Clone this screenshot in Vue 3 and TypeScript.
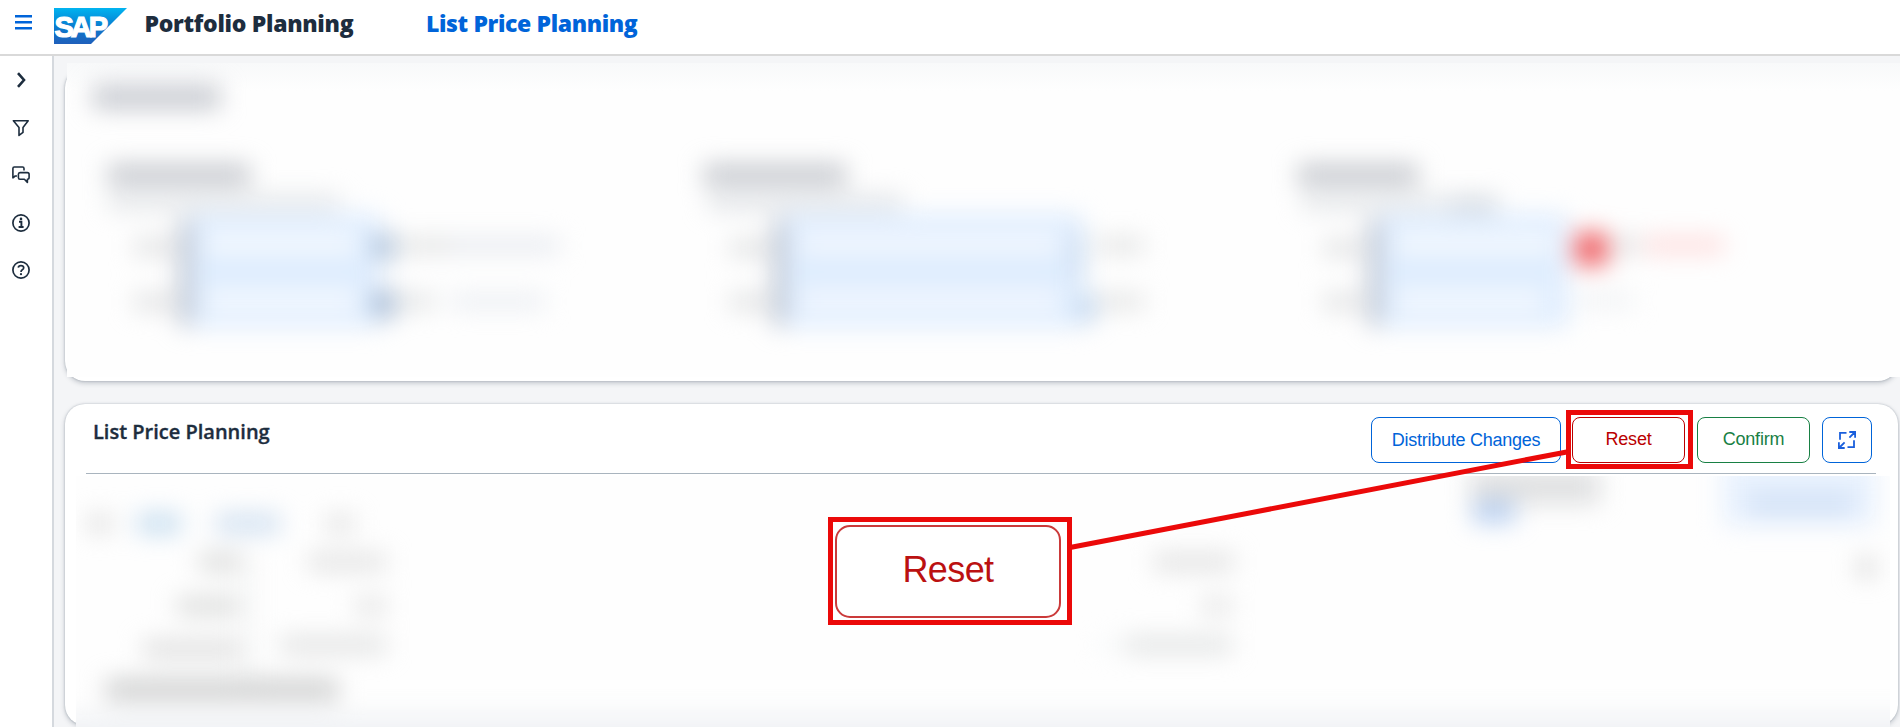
<script setup lang="ts">
interface Blob {
  x: number
  y: number
  w: number
  h: number
  c: string
}

const b = (x: number, y: number, w: number, h: number, c: string): Blob => ({ x, y, w, h, c })

const headingGrey = '#c2c5cb'
const textGrey = '#e0e1e2'

const summaryBlobs: Blob[] = [
  b(93, 86, 127, 22, '#c3c6cd'),

  b(108, 165, 142, 20, headingGrey),
  b(108, 196, 232, 13, '#dfe2e5'),
  b(134, 239, 40, 16, textGrey),
  b(134, 294, 40, 16, textGrey),
  b(188, 214, 192, 113, '#dfedfe'),
  b(206, 237, 150, 13, '#ffffff'),
  b(206, 294, 150, 13, '#ffffff'),
  b(180, 220, 10, 106, '#a9b1bf'),
  b(374, 234, 20, 26, '#a8bdd6'),
  b(374, 290, 20, 28, '#9fb4cf'),
  b(398, 238, 52, 15, '#e2e3e3'),
  b(450, 238, 110, 15, '#e7eaf0'),
  b(398, 294, 36, 15, '#e0e2e3'),
  b(450, 294, 95, 15, '#ebeef3'),

  b(704, 165, 142, 20, headingGrey),
  b(708, 196, 195, 13, '#dcdfe3'),
  b(730, 240, 38, 16, textGrey),
  b(730, 294, 38, 16, textGrey),
  b(782, 214, 300, 113, '#dfedfe'),
  b(800, 237, 260, 13, '#fcfcff'),
  b(800, 294, 260, 13, '#fcfcff'),
  b(774, 220, 10, 106, '#a9b1bf'),
  b(1072, 230, 12, 50, '#c6d8ee'),
  b(1080, 294, 14, 28, '#b6cee9'),
  b(1098, 238, 46, 15, '#e2e3e3'),
  b(1098, 294, 46, 15, '#e2e3e3'),

  b(1298, 165, 120, 20, headingGrey),
  b(1302, 196, 140, 13, '#dfe2e5'),
  b(1446, 197, 52, 14, '#cfd5dc'),
  b(1324, 240, 36, 16, textGrey),
  b(1324, 294, 36, 16, textGrey),
  b(1378, 214, 190, 113, '#dfedfe'),
  b(1396, 237, 158, 13, '#ffffff'),
  b(1396, 294, 148, 13, '#ffffff'),
  b(1369, 220, 10, 106, '#a9b1bf'),
  b(1575, 233, 32, 32, '#ee5a5e'),
  b(1612, 238, 28, 15, '#dfe0e1'),
  b(1644, 237, 80, 16, '#ffdcdc'),
  b(1578, 294, 55, 13, '#eff1f4'),
]

const planningBlobs: Blob[] = [
  b(88, 515, 24, 17, '#dedede'),
  b(137, 514, 44, 19, '#c4dcef'),
  b(216, 514, 64, 19, '#cfdff0'),
  b(326, 515, 28, 17, '#e2e2e2'),
  b(199, 554, 42, 16, '#d8d9d8'),
  b(308, 554, 78, 16, '#e1e1e1'),
  b(177, 598, 62, 16, '#d8d9d8'),
  b(356, 598, 30, 16, '#e2e2e2'),
  b(143, 641, 98, 16, '#dcdcdc'),
  b(280, 637, 106, 16, '#e0e1e1'),
  b(244, 555, 8, 130, '#f2f4f4'),
  b(106, 680, 232, 20, '#cbcccc'),
  b(1154, 554, 80, 16, '#e0e0e0'),
  b(1202, 598, 30, 16, '#e4e4e4'),
  b(1124, 637, 108, 16, '#e1e3e3'),
  b(1100, 638, 12, 14, '#f3f7f9'),
  b(1470, 470, 130, 34, '#dfe0e1'),
  b(1473, 502, 42, 20, '#b2ccf1'),
  b(1722, 460, 154, 66, '#e9f2fe'),
  b(1748, 493, 106, 22, '#d2e1f6'),
  b(1858, 559, 16, 17, '#d0d0d0'),
  b(40, 715, 1890, 60, '#f0f2f5'),
]
</script>

<template>
  <div class="shell">
    <header class="topbar">
      <svg class="menu-icon" width="17" height="15" viewBox="0 0 17 15">
        <path d="M0 1.300h17M0 7.300h17M0 13.300h17" fill="none" stroke="#0064d9" stroke-width="2.6" />
      </svg>
      <svg class="logo" width="73" height="36" viewBox="0 0 73 36">
        <defs>
          <linearGradient id="logoFill" x1="0" y1="0" x2="0" y2="1">
            <stop offset="0" stop-color="#00b4f0" />
            <stop offset="0.5" stop-color="#0a7dd0" />
            <stop offset="1" stop-color="#1f5fbb" />
          </linearGradient>
        </defs>
        <path d="M0 0H73L37 36H0Z" fill="url(#logoFill)" />
        <text class="logo-text" x="0.5" y="28.5" textLength="53.5" lengthAdjust="spacing">SAP</text>
      </svg>
      <h1 class="product">Portfolio Planning</h1>
      <a class="page-name">List Price Planning</a>
    </header>

    <div class="body">
      <nav class="rail">
        <svg viewBox="0 0 20 20"><path d="M7 3.2 13 10l-6 6.800" stroke-width="2.6" /></svg>
        <svg viewBox="0 0 20 20"><path d="M2.400 2.700h14.800L12 9.600v4.800l-4 3V9.600Z" stroke-width="1.6" stroke-linejoin="round" /></svg>
        <svg viewBox="0 0 20 20">
          <path d="M6 11H4.200L1.900 12.800V3.400Q1.900 2 3.300 2h8.300Q13 2 13 3.400V5.400" stroke-width="1.6" stroke-linejoin="round" />
          <path d="M9 7.600h7.400q1.700 0 1.700 1.700v3.200q0 1.700-1.700 1.700v3.200l-3-3.200H9q-1.600 0-1.600-1.700V9.300q0-1.700 1.600-1.700Z" stroke-width="1.6" stroke-linejoin="round" />
        </svg>
        <svg viewBox="0 0 20 20">
          <circle cx="10" cy="10" r="8.1" stroke-width="1.7" />
          <path d="M8 8.7h2.4v5M7.6 14h5" stroke-width="1.9" />
          <circle class="solid" cx="10" cy="5.9" r="1.3" />
        </svg>
        <svg viewBox="0 0 20 20">
          <circle cx="10" cy="10" r="8.1" stroke-width="1.7" />
          <path d="M7.3 7.7Q7.5 5.6 10 5.6t2.7 2.1q0 1.2-1.4 2Q10 10.500 10 12" stroke-width="1.7" />
          <circle class="solid" cx="10" cy="14.2" r="1.1" />
        </svg>
      </nav>

      <main class="content">
        <section class="card summary">
          <svg class="haze" width="1833" height="314" viewBox="67 63 1833 314">
            <defs>
              <filter id="soft" filterUnits="userSpaceOnUse" x="0" y="0" width="1960" height="800" color-interpolation-filters="sRGB">
                <feGaussianBlur stdDeviation="12" />
              </filter>
              <linearGradient id="topFade" x1="0" y1="0" x2="0" y2="1">
                <stop offset="0" stop-color="#f8f9fa" />
                <stop offset="1" stop-color="#fefefe" />
              </linearGradient>
            </defs>
            <rect x="67" y="63" width="1833" height="314" fill="#fefefe" />
            <rect x="67" y="63" width="1833" height="28" fill="url(#topFade)" />
            <g filter="url(#soft)">
              <rect v-for="(s, i) in summaryBlobs" :key="i" :x="s.x" :y="s.y" :width="s.w" :height="s.h" :fill="s.c" />
            </g>
          </svg>
        </section>

        <section class="card planning">
          <div class="card-head">
            <h2>List Price Planning</h2>
            <div class="actions">
              <button class="btn distribute">Distribute Changes</button>
              <button class="btn reset">Reset</button>
              <button class="btn confirm">Confirm</button>
              <button class="btn expand" aria-label="Expand">
                <svg width="20" height="20" viewBox="0 0 20 20">
                  <path d="M9.500 2.800H3v7M10.500 17.200H17v-7M12.300 2h5.800v5.800M18 2l-5.600 5.600M7.700 18H1.900v-5.800M2 18l5.600-5.600" fill="none" stroke="#1a5fdc" stroke-width="1.8" />
                </svg>
              </button>
            </div>
          </div>
          <svg class="haze" width="1814" height="251" viewBox="76 476 1814 251">
            <rect x="76" y="476" width="1814" height="251" fill="#fefefe" />
            <g filter="url(#soft)">
              <rect v-for="(s, i) in planningBlobs" :key="i" :x="s.x" :y="s.y" :width="s.w" :height="s.h" :fill="s.c" />
            </g>
          </svg>
        </section>
      </main>
    </div>

    <svg class="connector" width="1900" height="727" viewBox="0 0 1900 727">
      <path d="M1070 547.500 1568 451.700" fill="none" stroke="#eb0909" stroke-width="5" />
      <rect x="1568.500" y="412.500" width="122" height="54" fill="none" stroke="#eb0909" stroke-width="5" />
    </svg>
    <div class="callout"><span>Reset</span></div>
  </div>
</template>

<style>
html,
body {
  margin: 0;
  overflow: hidden;
}
</style>

<style scoped>
.shell {
  position: relative;
  display: flex;
  flex-direction: column;
  width: 1900px;
  height: 727px;
  overflow: hidden;
  background: #f4f5f7;
  color: #1d2d3e;
  font-family: "Open Sans", "Noto Sans", sans-serif;
}
.topbar {
  display: flex;
  align-items: flex-start;
  flex: none;
  box-sizing: border-box;
  height: 56px;
  background: #fff;
  border-bottom: 2px solid #d9d9d9;
}
.menu-icon {
  margin: 15px 0 0 15px;
}
.logo {
  margin: 8px 0 0 22px;
}
.logo-text {
  font: bold 29px "Liberation Sans", Arial, sans-serif;
  fill: #fff;
  stroke: #fff;
  stroke-width: 1.2px;
}
.product,
.page-name {
  margin: 0;
  padding-top: 7px;
  font-size: 23px;
  line-height: 32px;
  font-weight: 800;
  white-space: nowrap;
}
.product {
  width: 281.500px;
  margin-left: 17.500px;
  letter-spacing: -0.3px;
}
.page-name {
  color: #0064d9;
  letter-spacing: -0.38px;
}
.body {
  display: flex;
  flex: 1;
  min-height: 0;
}
.rail {
  display: flex;
  flex-direction: column;
  align-items: center;
  gap: 27.500px;
  flex: none;
  box-sizing: border-box;
  width: 54px;
  padding: 14px 11px 0 0;
  background: #fff;
  border-right: 2px solid #d5d9de;
}
.rail svg {
  flex: none;
  width: 20px;
  height: 20px;
  fill: none;
  stroke: #1d2d3e;
}
.rail .solid {
  fill: #1d2d3e;
  stroke: none;
}
.content {
  display: flex;
  flex-direction: column;
  gap: 23px;
  flex: none;
  width: 1846px;
  padding: 12px 0 0 11px;
  box-sizing: border-box;
}
.card {
  box-sizing: border-box;
  flex: none;
  width: 1833px;
  background: #fff;
  border-radius: 20px;
  box-shadow: 0 0 2px rgba(34, 53, 72, 0.28), 0 2px 5px rgba(34, 53, 72, 0.25);
}
.haze {
  display: block;
}
.summary {
  height: 313px;
}
.summary .haze {
  margin: -5px 0 0 2px;
}
.planning {
  height: 321px;
}
.planning .haze {
  margin: 2px 0 0 11px;
}
.card-head {
  display: flex;
  justify-content: space-between;
  box-sizing: border-box;
  height: 70px;
  margin: 0 22px 0 21px;
  padding: 13px 4px 0 7px;
  border-bottom: 1px solid #a9b4be;
}
.card-head h2 {
  margin: 0;
  padding-top: 1px;
  font-size: 20px;
  line-height: 28px;
  font-weight: 600;
  -webkit-text-stroke: 0.35px #1d2d3e;
}
.actions {
  display: flex;
}
.btn {
  display: flex;
  align-items: center;
  justify-content: center;
  box-sizing: border-box;
  height: 46px;
  padding: 0;
  background: #fff;
  border: 1px solid currentColor;
  border-radius: 8px;
  font: 18px "Liberation Sans", Arial, sans-serif;
}
.distribute {
  width: 190px;
  color: #0064d9;
  letter-spacing: -0.25px;
}
.reset {
  width: 113px;
  margin-left: 11px;
  padding-bottom: 2px;
  color: #ba0000;
  letter-spacing: -0.2px;
}
.confirm {
  width: 113px;
  margin-left: 12px;
  padding-bottom: 2px;
  color: #188044;
  letter-spacing: -0.2px;
}
.expand {
  width: 50px;
  margin-left: 12px;
  color: #0064d9;
}
.connector {
  position: absolute;
  left: 0;
  top: 0;
  pointer-events: none;
}
.callout {
  position: absolute;
  left: 828px;
  top: 517px;
  box-sizing: border-box;
  width: 244px;
  height: 108px;
  padding: 3px 6px 2px 2px;
  background: #fff;
  border: 5px solid #eb0909;
}
.callout span {
  display: flex;
  align-items: center;
  justify-content: center;
  box-sizing: border-box;
  width: 100%;
  height: 100%;
  padding-bottom: 4px;
  border: 2.500px solid #cb3a3a;
  border-radius: 15px;
  color: #bb1111;
  font: 36px "Liberation Sans", Arial, sans-serif;
  letter-spacing: -0.6px;
}
</style>
